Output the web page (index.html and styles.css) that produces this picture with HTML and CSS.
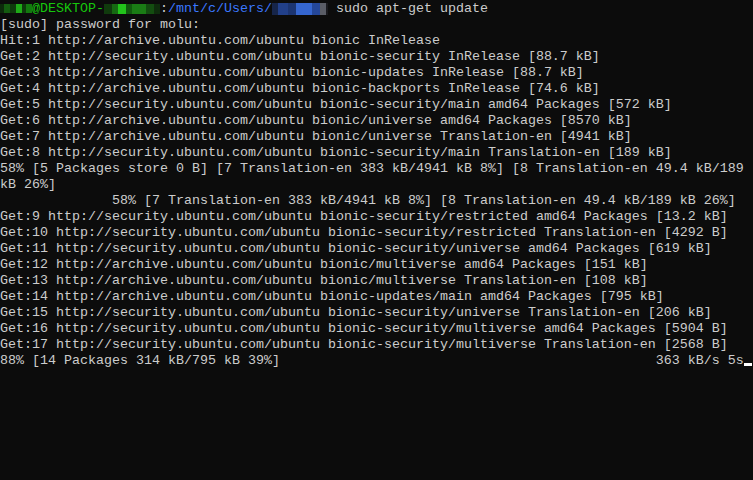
FILE: index.html
```html
<!DOCTYPE html>
<html>
<head>
<meta charset="utf-8">
<link rel="stylesheet" href="styles.css">
</head>
<body>
<div class="term">
<div class="line"><span class="mosaic user"></span><span class="green">@DESKTOP-</span><span class="mosaic host"></span><span class="white">:</span><span class="blue">/mnt/c/Users/</span><span class="mosaic name"></span><span class="sp8"></span>sudo apt-get update</div>
<div class="line">[sudo] password for molu:</div>
<div class="line">Hit:1 http://archive.ubuntu.com/ubuntu bionic InRelease</div>
<div class="line">Get:2 http://security.ubuntu.com/ubuntu bionic-security InRelease [88.7 kB]</div>
<div class="line">Get:3 http://archive.ubuntu.com/ubuntu bionic-updates InRelease [88.7 kB]</div>
<div class="line">Get:4 http://archive.ubuntu.com/ubuntu bionic-backports InRelease [74.6 kB]</div>
<div class="line">Get:5 http://security.ubuntu.com/ubuntu bionic-security/main amd64 Packages [572 kB]</div>
<div class="line">Get:6 http://archive.ubuntu.com/ubuntu bionic/universe amd64 Packages [8570 kB]</div>
<div class="line">Get:7 http://archive.ubuntu.com/ubuntu bionic/universe Translation-en [4941 kB]</div>
<div class="line">Get:8 http://security.ubuntu.com/ubuntu bionic-security/main Translation-en [189 kB]</div>
<div class="line">58% [5 Packages store 0 B] [7 Translation-en 383 kB/4941 kB 8%] [8 Translation-en 49.4 kB/189</div>
<div class="line">kB 26%]</div>
<div class="line">              58% [7 Translation-en 383 kB/4941 kB 8%] [8 Translation-en 49.4 kB/189 kB 26%]</div>
<div class="line">Get:9 http://security.ubuntu.com/ubuntu bionic-security/restricted amd64 Packages [13.2 kB]</div>
<div class="line">Get:10 http://security.ubuntu.com/ubuntu bionic-security/restricted Translation-en [4292 B]</div>
<div class="line">Get:11 http://security.ubuntu.com/ubuntu bionic-security/universe amd64 Packages [619 kB]</div>
<div class="line">Get:12 http://archive.ubuntu.com/ubuntu bionic/multiverse amd64 Packages [151 kB]</div>
<div class="line">Get:13 http://archive.ubuntu.com/ubuntu bionic/multiverse Translation-en [108 kB]</div>
<div class="line">Get:14 http://archive.ubuntu.com/ubuntu bionic-updates/main amd64 Packages [795 kB]</div>
<div class="line">Get:15 http://security.ubuntu.com/ubuntu bionic-security/universe Translation-en [206 kB]</div>
<div class="line">Get:16 http://security.ubuntu.com/ubuntu bionic-security/multiverse amd64 Packages [5904 B]</div>
<div class="line">Get:17 http://security.ubuntu.com/ubuntu bionic-security/multiverse Translation-en [2568 B]</div>
<div class="line">88% [14 Packages 314 kB/795 kB 39%]                                               363 kB/s 5s<span class="cursor"></span></div>
</div>
</body>
</html>
```
FILE: styles.css
```css
html, body {
  margin: 0;
  padding: 0;
  background: #0c0c0c;
}
.term {
  width: 753px;
  height: 480px;
  background: #0c0c0c;
  color: #cccccc;
  font-family: "Liberation Mono", monospace;
  font-size: 13.333px;
  line-height: 16px;
  padding-top: 1px;
  overflow: hidden;
  box-sizing: border-box;
}
.line {
  white-space: pre;
  height: 16px;
}
.green { color: #16c60c; }
.blue { color: #3b78ff; }
.white { color: #cccccc; }
.mosaic {
  display: inline-block;
  vertical-align: top;
  height: 16px;
}
.user {
  width: 32px;
  background:
    linear-gradient(to right,
      #0c2a0b 0, #0c2a0b 4px,
      #145c10 4px, #145c10 10px,
      #0e3a0c 10px, #0e3a0c 16px,
      #1faa18 16px, #1faa18 22px,
      #0e3a0c 22px, #0e3a0c 26px,
      #127a0e 26px, #127a0e 32px) 0 3px / 32px 9px no-repeat,
    linear-gradient(#0c0c0c, #0c0c0c);
}
.host {
  width: 56px;
  background:
    linear-gradient(to right,
      #103a0d 0, #103a0d 8px,
      #166a12 8px, #166a12 14px,
      #22c41b 14px, #22c41b 22px,
      #105a0d 22px, #105a0d 28px,
      #1a7c15 28px, #1a7c15 42px,
      #134d10 42px, #134d10 50px,
      #0e2c0c 50px, #0e2c0c 56px) 0 3px / 56px 10px no-repeat,
    linear-gradient(#0c0c0c, #0c0c0c);
}
.name {
  width: 56px;
  background:
    linear-gradient(to right,
      #16254a 0, #16254a 6px,
      #22408a 6px, #22408a 16px,
      #1c3572 16px, #1c3572 24px,
      #3566d0 24px, #3566d0 40px,
      #24479a 40px, #24479a 48px,
      #5a5d66 48px, #5a5d66 54px,
      #1a1a1e 54px, #1a1a1e 56px) 0 2px / 56px 12px no-repeat,
    linear-gradient(#0c0c0c, #0c0c0c);
}
.sp8 {
  display: inline-block;
  width: 8px;
}
.cursor {
  display: inline-block;
  width: 8px;
  height: 3px;
  background: #ffffff;
  vertical-align: -2px;
}
```
